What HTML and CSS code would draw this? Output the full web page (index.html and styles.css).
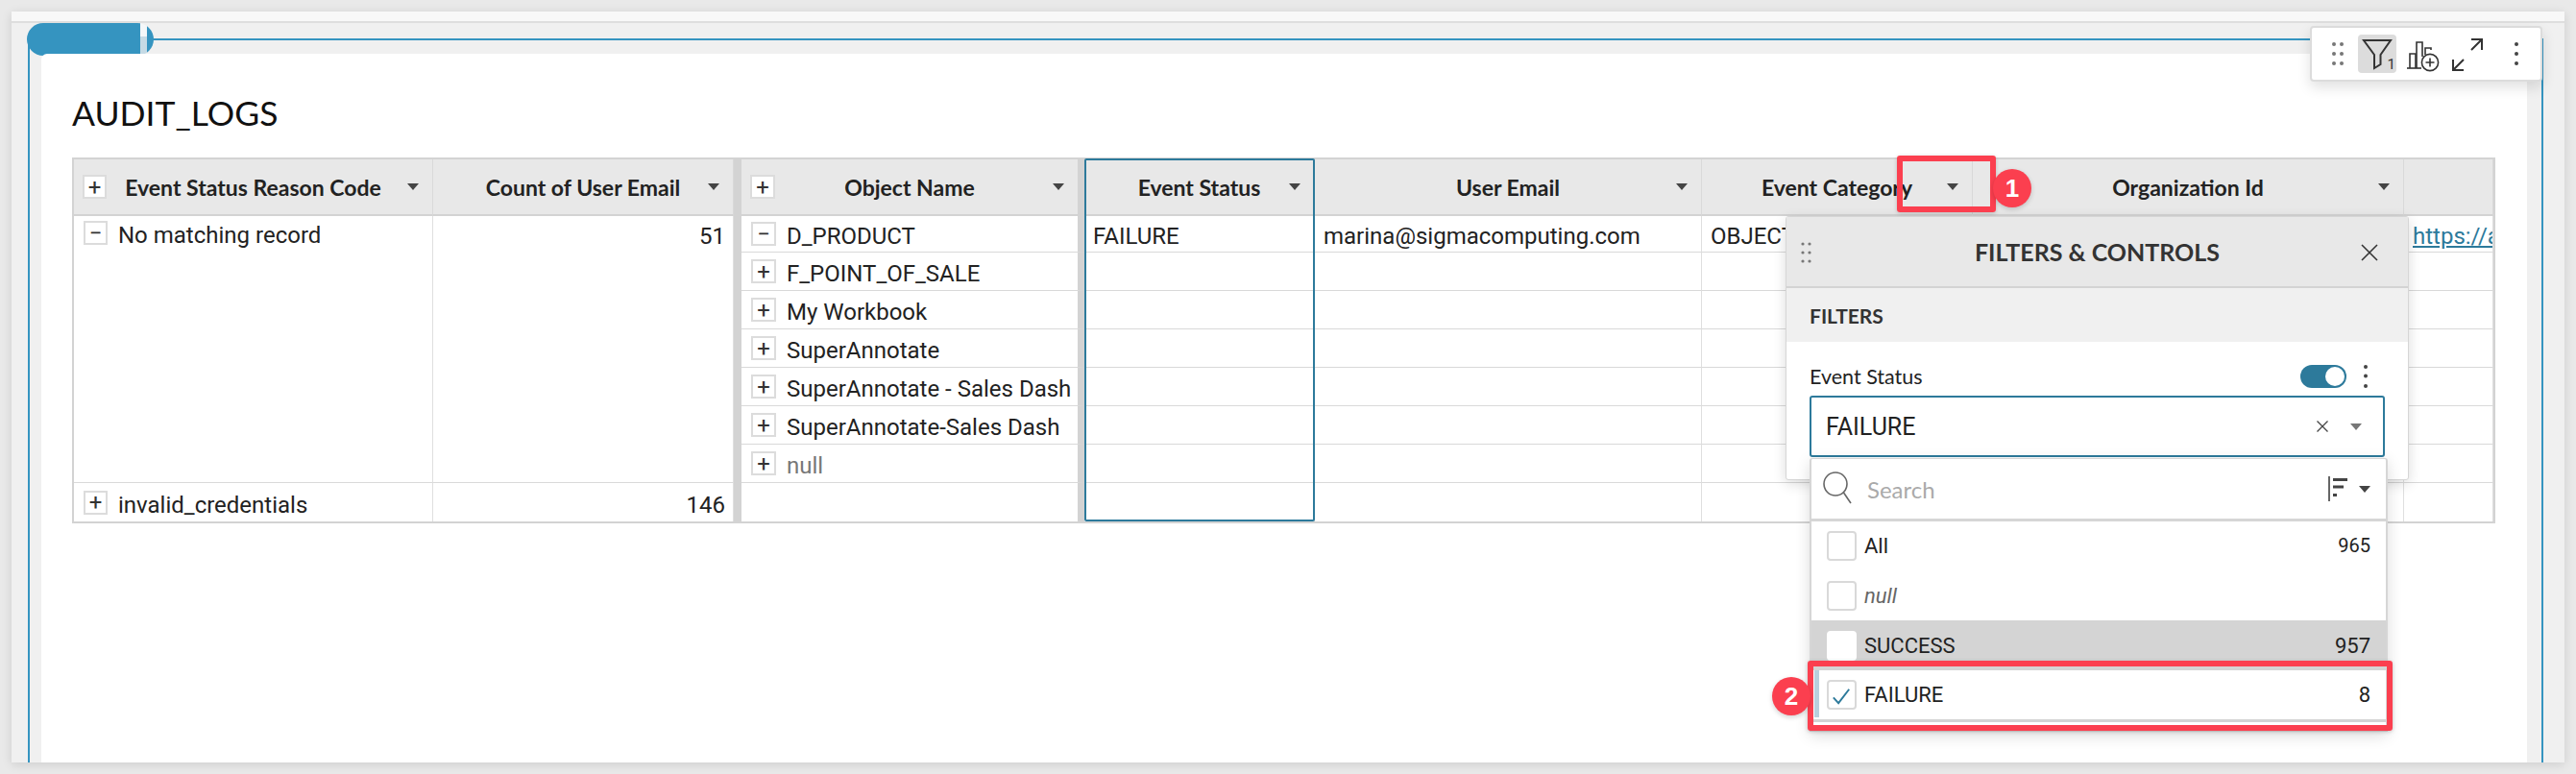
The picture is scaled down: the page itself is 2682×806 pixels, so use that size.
FILE: index.html
```html
<!DOCTYPE html>
<html lang="en">
  <head>
    <meta charset="UTF-8" />
    <meta name="viewport" content="width=device-width, initial-scale=1.0" />
    <title>AUDIT_LOGS</title>
    <link rel="stylesheet" href="styles.css">
  </head>
  <body>
    <div class="app">
      <div class="top-strip"></div>
      <main class="canvas">
        <div class="frame"></div>
        <div class="pill"></div>

        <section class="card">
          <h1 class="title">AUDIT_LOGS</h1>
          <div class="sheet">
            <div class="pivot pivot-left">
              <div class="head"><span class="slot"><span class="toggle">+</span></span><b>Event Status Reason Code</b><span class="slot end"><i class="caret"></i></span></div>
              <div class="head"><span class="slot"></span><b>Count of User Email</b><span class="slot end"><i class="caret"></i></span></div>
              <div class="cell top"><span class="toggle">−</span><span class="txt label">No matching record</span></div>
              <div class="cell top num"><span class="txt">51</span></div>
              <div class="cell"><span class="toggle">+</span><span class="txt label">invalid_credentials</span></div>
              <div class="cell num"><span class="txt">146</span></div>
            </div>

            <div class="pivot pivot-right">
              <div class="head obj"><span class="slot"><span class="toggle">+</span></span><b>Object Name</b><span class="slot end"><i class="caret"></i></span></div>
              <div class="head"><span class="slot"></span><b>Event Status</b><span class="slot end"><i class="caret"></i></span></div>
              <div class="head"><span class="slot"></span><b>User Email</b><span class="slot end"><i class="caret"></i></span></div>
              <div class="head"><span class="slot"></span><b>Event Category</b><span class="slot end"><i class="caret"></i></span></div>
              <div class="head"><span class="slot"></span><b>Organization Id</b><span class="slot end"><i class="caret"></i></span></div>
              <div class="head"></div>

              <div class="cell obj"><span class="toggle">−</span><span class="txt label">D_PRODUCT</span></div>
              <div class="cell"><span class="txt">FAILURE</span></div>
              <div class="cell"><span class="txt">marina@sigmacomputing.com</span></div>
              <div class="cell"><span class="txt">OBJECT</span></div>
              <div class="cell"></div>
              <div class="cell"><a class="txt link" href="#">https://a</a></div>

              <div class="cell obj"><span class="toggle">+</span><span class="txt label">F_POINT_OF_SALE</span></div>
              <div class="cell"></div><div class="cell"></div><div class="cell"></div><div class="cell"></div><div class="cell"></div>

              <div class="cell obj"><span class="toggle">+</span><span class="txt label">My Workbook</span></div>
              <div class="cell"></div><div class="cell"></div><div class="cell"></div><div class="cell"></div><div class="cell"></div>

              <div class="cell obj"><span class="toggle">+</span><span class="txt label">SuperAnnotate</span></div>
              <div class="cell"></div><div class="cell"></div><div class="cell"></div><div class="cell"></div><div class="cell"></div>

              <div class="cell obj"><span class="toggle">+</span><span class="txt label">SuperAnnotate - Sales Dash</span></div>
              <div class="cell"></div><div class="cell"></div><div class="cell"></div><div class="cell"></div><div class="cell"></div>

              <div class="cell obj"><span class="toggle">+</span><span class="txt label">SuperAnnotate-Sales Dash</span></div>
              <div class="cell"></div><div class="cell"></div><div class="cell"></div><div class="cell"></div><div class="cell"></div>

              <div class="cell obj"><span class="toggle">+</span><span class="txt label muted">null</span></div>
              <div class="cell"></div><div class="cell"></div><div class="cell"></div><div class="cell"></div><div class="cell"></div>

              <div class="cell obj"></div>
              <div class="cell"></div><div class="cell"></div><div class="cell"></div><div class="cell"></div><div class="cell"></div>

              <div class="col-select"></div>
            </div>
          </div>
        </section>

        <div class="toolbar">
          <svg class="tool-icon" width="24" height="40" viewBox="0 0 24 40">
            <g fill="#777"><circle cx="8" cy="10" r="2"/><circle cx="16" cy="10" r="2"/><circle cx="8" cy="20" r="2"/><circle cx="16" cy="20" r="2"/><circle cx="8" cy="30" r="2"/><circle cx="16" cy="30" r="2"/></g>
          </svg>
          <span class="filter-btn">
            <svg width="40" height="40" viewBox="0 0 40 40">
              <path d="M6 6H34L23.5 21V31L17 35V21Z" fill="none" stroke="#333" stroke-width="2"/>
            </svg>
            <span class="filter-count">1</span>
          </span>
          <svg class="tool-icon" width="38" height="40" viewBox="0 0 38 40">
            <g fill="none" stroke="#333" stroke-width="1.6">
              <path d="M1 35H16"/>
              <path d="M4 35V20H10V35"/>
              <path d="M11 35V8H17V23"/>
              <path d="M20 21V14H26V16"/>
              <circle cx="25" cy="29" r="8.6"/>
              <path d="M20.5 29H29.5M25 24.5V33.5"/>
            </g>
          </svg>
          <svg class="tool-icon" width="36" height="40" viewBox="0 0 36 40">
            <g fill="none" stroke="#333" stroke-width="2">
              <path d="M2 37L13 26M2 26V37H13"/>
              <path d="M21 16L32 5M21 5H32V16"/>
            </g>
          </svg>
          <svg class="tool-icon kebab" width="24" height="40" viewBox="0 0 24 40">
            <g fill="#444"><circle cx="12" cy="10" r="2"/><circle cx="12" cy="20" r="2"/><circle cx="12" cy="30" r="2"/></g>
          </svg>
        </div>

        <aside class="panel">
          <header class="panel-head">
            <svg class="drag" width="14" height="24" viewBox="0 0 14 24">
              <g fill="#777"><circle cx="3" cy="3" r="1.6"/><circle cx="10" cy="3" r="1.6"/><circle cx="3" cy="12" r="1.6"/><circle cx="10" cy="12" r="1.6"/><circle cx="3" cy="21" r="1.6"/><circle cx="10" cy="21" r="1.6"/></g>
            </svg>
            <h2>FILTERS &amp; CONTROLS</h2>
            <svg class="close" width="20" height="20" viewBox="0 0 20 20">
              <path d="M2 2L18 18M18 2L2 18" stroke="#333" stroke-width="1.6" fill="none"/>
            </svg>
          </header>
          <div class="panel-section">FILTERS</div>
          <div class="panel-body">
            <div class="filter-row">
              <span class="filter-name">Event Status</span>
              <span class="switch"></span>
              <svg width="8" height="26" viewBox="0 0 8 26">
                <g fill="#444"><circle cx="4" cy="3" r="2"/><circle cx="4" cy="12.5" r="2"/><circle cx="4" cy="23" r="2"/></g>
              </svg>
            </div>
            <div class="select">
              <span class="select-value">FAILURE</span>
              <svg width="14" height="14" viewBox="0 0 14 14">
                <path d="M1.5 1.5L12.5 12.5M12.5 1.5L1.5 12.5" stroke="#444" stroke-width="1.3" fill="none"/>
              </svg>
              <i class="caret soft"></i>
            </div>
          </div>
        </aside>

        <div class="dropdown">
          <div class="search">
            <svg width="34" height="36" viewBox="0 0 34 36">
              <circle cx="14" cy="13" r="12" fill="none" stroke="#666" stroke-width="1.6"/>
              <path d="M22.5 22L30 33" stroke="#666" stroke-width="1.6"/>
            </svg>
            <span class="placeholder">Search</span>
            <svg class="sort" width="22" height="26" viewBox="0 0 22 26">
              <path d="M1 0V26" stroke="#333" stroke-width="1.5"/>
              <path d="M5 3.5H20M5 11H16M5 19.5H9" stroke="#444" stroke-width="3"/>
            </svg>
            <i class="caret"></i>
          </div>
          <div class="option"><span class="check"></span><span class="opt-label">All</span><span class="opt-count small">965</span></div>
          <div class="option"><span class="check"></span><span class="opt-label null">null</span></div>
          <div class="option hover"><span class="check"></span><span class="opt-label">SUCCESS</span><span class="opt-count">957</span></div>
          <div class="option chosen">
            <span class="check">
              <svg width="28" height="28" viewBox="0 0 28 28"><path d="M5 17L10.5 23L22 8" fill="none" stroke="#2d7a9b" stroke-width="2"/></svg>
            </span>
            <span class="opt-label">FAILURE</span><span class="opt-count">8</span>
          </div>
        </div>

        <div class="mark mark-one"></div>
        <div class="badge badge-one">1</div>
        <div class="mark mark-two"></div>
        <div class="badge badge-two">2</div>
      </main>
    </div>
  </body>
</html>
```

FILE: styles.css
```css
* {
  box-sizing: border-box;
  margin: 0;
}
html,
body {
  height: 100%;
}
body {
  background-color: #e9e9e9;
  padding: 12px;
  font-family: "Roboto", sans-serif;
  color: #222;
  overflow: hidden;
}
.app {
  display: flex;
  flex-direction: column;
  height: 782px;
  width: 2658px;
  box-shadow: 0 2px 10px rgba(0, 0, 0, 0.12);
}
.top-strip {
  height: 12px;
  background-color: #f8f8f8;
  border-bottom: 2px solid #dedede;
}
.canvas {
  position: relative;
  flex: 1;
  background-color: #f0f0f0;
  padding: 32px 39px 0 31px;
  display: flex;
}

/* blue selection frame and its tab */
.frame {
  position: absolute;
  left: 17px;
  top: 16px;
  right: 22px;
  bottom: 0;
  border: 2px solid #3594c0;
  border-bottom: none;
}
.pill {
  position: absolute;
  left: 16px;
  top: 0;
  width: 132px;
  height: 34px;
  border-radius: 17px;
  background:
    linear-gradient(#f4f7f9, #f4f7f9) 118px 0 / 7px 14px no-repeat,
    linear-gradient(#c5dae5, #c5dae5) 118px 14px / 7px 20px no-repeat,
    #3594c0;
}

.card {
  position: relative;
  flex: 1;
  background-color: #fff;
  border-top-left-radius: 6px;
  padding: 42px 33px 0 32px;
}
.title {
  font-family: "Lato", sans-serif;
  font-size: 35.5px;
  font-weight: 400;
  line-height: 40px;
  margin-bottom: 26px;
  color: #111;
}

/* table */
.sheet {
  display: flex;
  height: 381px;
  width: 2523px;
}
.pivot {
  display: grid;
  border: solid #d3d3d3;
  border-width: 2px 0 2px 0;
}
.pivot-left {
  width: 697px;
  border-left-width: 2px;
  border-right-width: 8px;
  grid-template-columns: 374px 313px;
  grid-template-rows: 59px 278px 40px;
}
.pivot-right {
  position: relative;
  width: 1826px;
  border-right-width: 2px;
  grid-template-columns: 357px 240px 403px 282px 449px 93px;
  grid-template-rows: 59px 38px repeat(7, 40px);
}
.head {
  display: grid;
  grid-template-columns: 1fr auto 1fr;
  align-items: center;
  background-color: #e8e8e8;
  border-right: 1px solid #d9d9d9;
  border-bottom: 2px solid #d3d3d3;
  padding: 0 12px;
}
.head b {
  font-family: "Lato", sans-serif;
  font-size: 23px;
  font-weight: 700;
  color: #222;
  white-space: nowrap;
}
.slot {
  display: flex;
  align-items: center;
}
.slot.end {
  justify-content: flex-end;
  padding-right: 2px;
}
.head .toggle {
  margin-left: -3px;
}
.caret {
  display: block;
  width: 0;
  height: 0;
  border-left: 6.5px solid transparent;
  border-right: 6.5px solid transparent;
  border-top: 7px solid #444;
}
.caret.soft {
  border-top-color: #777;
}
.cell {
  display: flex;
  align-items: center;
  gap: 11px;
  padding: 0 9px;
  font-size: 24px;
  color: #222;
  white-space: nowrap;
  overflow: hidden;
  border-right: 1px solid #dfdfdf;
  border-bottom: 1px solid #d9d9d9;
}
.cell.top {
  align-items: flex-start;
  padding-top: 5px;
}
.cell.num {
  justify-content: flex-end;
  padding-right: 8px;
}
.cell.obj,
.head.obj {
  border-right: 7px solid #d3d3d3;
}
.pivot-left .cell:nth-last-child(-n + 2),
.pivot-right .cell:nth-last-of-type(-n + 7) {
  border-bottom: none;
}
.txt {
  padding-top: 5px;
}
.cell.top .txt {
  padding-top: 2px;
}
.label {
  line-height: 26px;
}
.muted {
  color: #777;
}
.link {
  color: #2d7a9b;
}
.toggle {
  flex: none;
  width: 25px;
  height: 25px;
  display: grid;
  place-content: center;
  background-color: #fff;
  border: 2px solid #dcdcdc;
  font-size: 24px;
  line-height: 1;
  color: #333;
}
.cell .toggle {
  margin-left: 1px;
}
.pivot-right .toggle {
  width: 26px;
}
.col-select {
  position: absolute;
  grid-column: 2 / 3;
  grid-row: 1 / -1;
  inset: -1px 0 0 0;
  border: 2px solid #2d7a9b;
  border-radius: 2px;
  pointer-events: none;
}

/* floating toolbar */
.toolbar {
  position: absolute;
  left: 2393px;
  top: 3px;
  width: 242px;
  height: 58px;
  display: flex;
  align-items: center;
  padding-left: 15px;
  background-color: #fff;
  border: 2px solid #dcdcdc;
  border-radius: 4px;
  box-shadow: 0 6px 14px rgba(0, 0, 0, 0.12);
}
.tool-icon {
  flex: none;
}
.filter-btn {
  position: relative;
  width: 40px;
  height: 40px;
  margin-left: 9px;
  margin-right: 10px;
  background-color: #dcdcdc;
  border-radius: 4px;
}
.filter-btn svg {
  display: block;
}
.filter-count {
  position: absolute;
  right: 1px;
  bottom: 0;
  font-size: 15px;
  line-height: 18px;
  color: #333;
}
.tool-icon + .tool-icon {
  margin-left: 9px;
}
.tool-icon.kebab {
  margin-left: 20px;
}

/* filters panel */
.panel {
  position: absolute;
  left: 1847px;
  top: 201px;
  width: 649px;
  height: 275px;
  background-color: #fff;
  border: 1px solid #d6d6d6;
  border-radius: 3px;
  box-shadow: 0 4px 14px rgba(0, 0, 0, 0.14);
  display: flex;
  flex-direction: column;
}
.panel-head {
  position: relative;
  display: flex;
  align-items: center;
  justify-content: center;
  height: 74px;
  flex: none;
  background-color: #e8e8e8;
  border-bottom: 2px solid #d3d3d3;
}
.panel-head h2 {
  font-family: "Lato", sans-serif;
  font-size: 25px;
  font-weight: 700;
  color: #333;
}
.drag {
  position: absolute;
  left: 14px;
  top: 25px;
}
.close {
  position: absolute;
  right: 30px;
  top: 27px;
}
.panel-section {
  height: 56px;
  flex: none;
  display: flex;
  align-items: center;
  padding-left: 24px;
  background-color: #f0f0f0;
  font-family: "Lato", sans-serif;
  font-size: 21px;
  font-weight: 700;
  color: #333;
}
.panel-body {
  flex: 1;
  padding: 24px 25px 0 24px;
}
.filter-row {
  display: flex;
  align-items: center;
  gap: 16px;
  height: 24px;
  padding-right: 15px;
  margin-bottom: 8px;
}
.filter-name {
  flex: 1;
  font-family: "Lato", sans-serif;
  font-size: 21.5px;
  color: #222;
}
.switch {
  position: relative;
  width: 48px;
  height: 24px;
  border-radius: 12px;
  background-color: #2d7a9b;
}
.switch::after {
  content: "";
  position: absolute;
  right: 2px;
  top: 2px;
  width: 20px;
  height: 20px;
  border-radius: 50%;
  background-color: #fff;
}
.select {
  display: flex;
  align-items: center;
  gap: 22px;
  height: 64px;
  padding: 0 22px 0 15px;
  width: 599px;
  background-color: #fff;
  border: 2px solid #2d7a9b;
  border-radius: 3px;
}
.select-value {
  flex: 1;
  font-size: 25px;
  color: #222;
}

/* value list */
.dropdown {
  position: absolute;
  left: 1872px;
  top: 453px;
  width: 602px;
  height: 285px;
  background-color: #fff;
  border: 2px solid #d6d6d6;
  border-top-width: 1px;
  border-radius: 3px 3px 0 0;
  box-shadow: 0 4px 16px rgba(0, 0, 0, 0.14);
}
.search {
  display: flex;
  align-items: center;
  height: 65px;
  padding: 0 16px 0 11px;
  border-bottom: 3px solid #d6d6d6;
}
.placeholder {
  flex: 1;
  margin-left: 13px;
  font-family: "Lato", sans-serif;
  font-size: 24px;
  color: #aaa;
}
.sort {
  margin-right: 10px;
}
.option {
  position: relative;
  display: flex;
  align-items: center;
  height: 52px;
  padding: 0 16px 0 16px;
  margin-top: -1px;
  margin-bottom: 1px;
  font-size: 22px;
  color: #222;
}
.option.hover {
  background-color: #d4d4d4;
}
.option.hover .check {
  border-color: #fff;
}
.option.chosen {
  height: 54px;
  border-bottom: 3px solid #d3d3d3;
}
.option.chosen::before {
  content: "";
  position: absolute;
  left: 3px;
  top: 0;
  bottom: 2px;
  width: 5px;
  background-color: #b8d0de;
}
.check {
  flex: none;
  width: 31px;
  height: 31px;
  background-color: #fff;
  border: 2px solid #d9d9d9;
  border-radius: 4px;
  margin-right: 8px;
}
.check svg {
  display: block;
  margin: 0;
  width: 27px;
  height: 27px;
}
.opt-label {
  flex: 1;
}
.opt-label.null {
  font-style: italic;
  color: #666;
}
.opt-count.small {
  font-size: 20px;
}

/* red annotations */
.mark {
  position: absolute;
  border: 6px solid #fb3f4f;
  border-radius: 3px;
  box-shadow: 0 1px 4px rgba(0, 0, 0, 0.2);
}
.mark-one {
  left: 1963px;
  top: 138px;
  width: 103px;
  height: 59px;
}
.mark-two {
  left: 1870px;
  top: 664px;
  width: 609px;
  height: 73px;
}
.badge {
  position: absolute;
  width: 40px;
  height: 40px;
  display: grid;
  place-content: center;
  border-radius: 50%;
  background-color: #fb3f4f;
  color: #fff;
  font-family: "Liberation Sans", sans-serif;
  font-size: 26px;
  font-weight: 700;
  box-shadow: 0 2px 5px rgba(0, 0, 0, 0.18);
}
.badge-one {
  left: 2063px;
  top: 152px;
}
.badge-two {
  left: 1833px;
  top: 681px;
}
```
